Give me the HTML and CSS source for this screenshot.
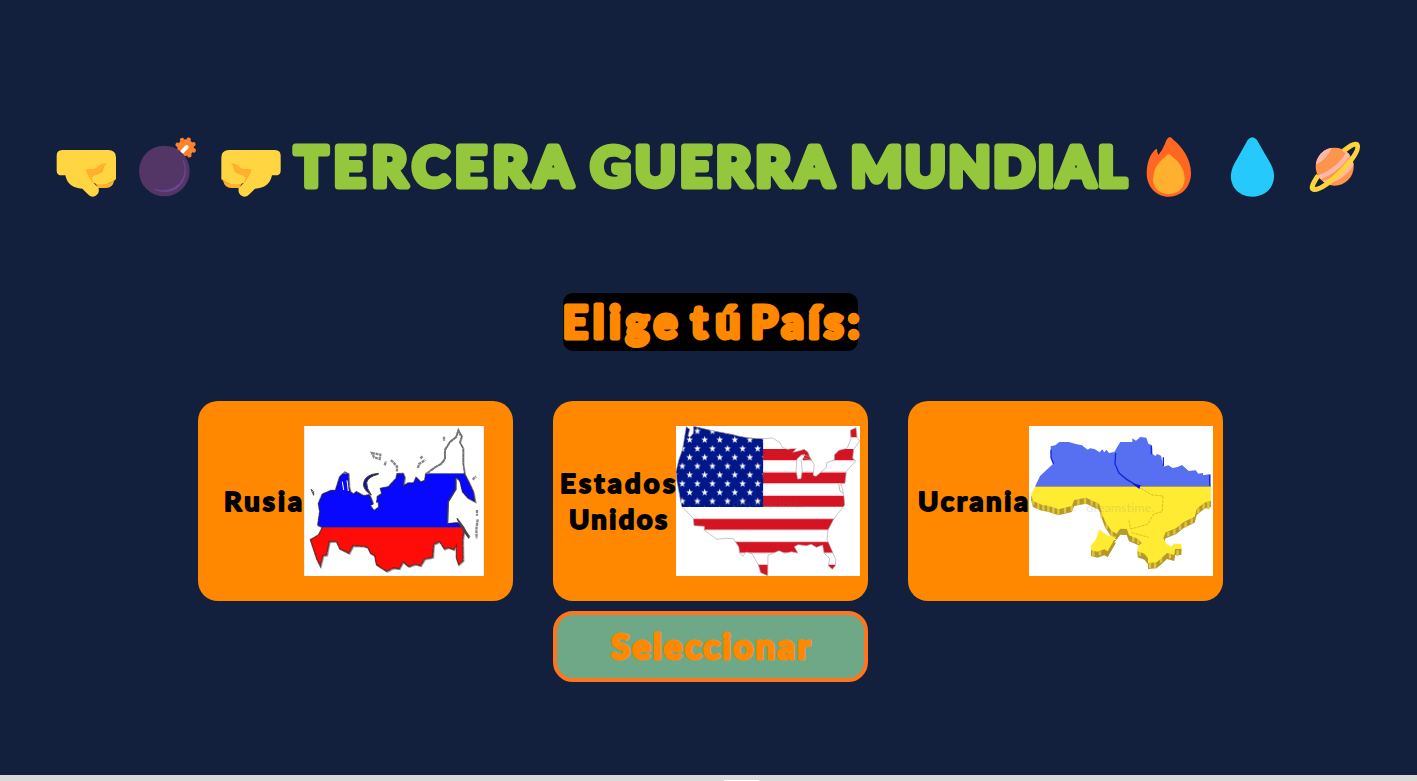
FILE: index.html
```html
<!DOCTYPE html>
<html lang="es">
<head>
<meta charset="utf-8">
<title>Tercera Guerra Mundial</title>
<link rel="stylesheet" href="styles.css">
</head>
<body>
<main class="page">
  <header class="hero">
    <div class="emojis emojis-left">
      <svg class="emoji" viewBox="45 45 192 192">
        <g id="fist">
          <path fill="#ffb02e" d="M150 160H222V184Q218 204 198 204H174Z"/>
          <path fill="#ffd642" d="M67 90H207Q228 92 228 112V177Q213 193 189 193Q170 193 160 188L176 204Q179 221 166 228Q153 234 143 222L127 206Q84 205 76 166H66Q50 166 50 152V107Q50 91 67 90Z"/>
          <path fill="#ffb02e" d="M141 147H161Q170 147 175 139Q183 130 200 130Q190 139 190 150Q188 160 177 161Q162 165 155 173L163 190Q149 181 138 152Q138 148 141 147Z"/>
          <path d="M202 191Q216 188 228 177" fill="none" stroke="#ce8623" stroke-width="2"/>
        </g>
      </svg>
      <svg class="emoji" viewBox="291 45 192 192">
        <circle cx="437" cy="83" r="25" fill="#ff822d"/>
        <circle cx="437" cy="83" r="26" fill="none" stroke="#ff822d" stroke-width="12" stroke-linecap="round" stroke-dasharray="1 19.42" stroke-dashoffset="-8"/>
        <circle cx="373" cy="153" r="76" fill="#533566"/>
        <path d="M427 95L440 81" stroke="#fff" stroke-width="12" stroke-linecap="round"/><path d="M417 91L430 103L425 108L411 97Z" fill="#533566"/>
        <path d="M430 120Q445 161 418 191Q388 220 343 208Q382 224 412 204Q449 173 430 120Z" fill="#6d4590" stroke="#6d4590" stroke-width="2"/>
      </svg>
      <svg class="emoji" viewBox="537 45 192 192"><use href="#fist" transform="translate(772 0) scale(-1 1)"/></svg>
    </div>
    <h1 class="title">
      <svg class="lettering title-text" width="854" height="64">
        <text x="12" y="50.5" textLength="277">TERCERA</text>
        <text x="308" y="50.5" textLength="242">GUERRA</text>
        <text x="568" y="50.5" textLength="275">MUNDIAL</text>
      </svg>
    </h1>
    <div class="emojis emojis-right">
      <svg class="emoji" viewBox="51 45 192 192">
        <path fill="#ff6723" d="M148 51Q154 51 161 60C186 80 213 117 213 160C213 200 186 230 147 230C108 230 80 200 80 158C81 127 90 102 107 88L111 87Q111 98 115 105Q127 91 135 71Q140 55 148 51Z"/>
        <path fill="#ffb02e" d="M139 107Q147 99 154 107Q194 137 194 175C194 206 173 222 147 222C119 222 99 206 99 176Q99 137 139 107Z"/>
      </svg>
      <svg class="emoji" viewBox="303 45 192 192">
        <path fill="#26c9fc" d="M383 60Q397 43 411 60Q423 82 452 131C479 181 449 230 397 230C345 230 316 181 343 131Q371 82 383 60Z"/>
      </svg>
      <svg class="emoji" viewBox="555 45 192 192">
        <clipPath id="planet"><circle cx="644" cy="140" r="57"/></clipPath>
        <g clip-path="url(#planet)">
          <path fill="#ff944d" d="M580 80H710V200H580Z"/>
          <path d="M575 137Q623 126 641 69L587 70ZM665 91Q681 81 705 98L690 106Q677 103 665 91Z" fill="#ffb8aa"/>
          <path d="M594 174Q656 151 690 94M610 189Q678 174 706 112" fill="none" stroke="#ffb8aa" stroke-width="14"/>
        </g>
        <path d="M671 93Q702 66 711 74Q722 90 674 143Q608 212 580 208Q569 203 595 166" fill="none" stroke="#ffd43b" stroke-width="15"/>
      </svg>
    </div>
  </header>

  <h2 class="prompt">
    <svg class="lettering prompt-text" width="295" height="58">
      <text x="0" y="45" textLength="114">Elige</text>
      <text x="128" y="45" textLength="49">tú</text>
      <text x="188" y="45" textLength="108">País:</text>
    </svg>
  </h2>

  <section class="countries">
    <article class="card">
      <svg class="lettering name" width="77" height="72"><text x="-3" y="46" textLength="78">Rusia</text></svg>
      <svg class="map" width="180" height="150" viewBox="327 93 540 450">
        <defs>
          <path id="russia-land" d="M346 434L370 420L382 397L368 390L374 350L370 325L382 297L408 286L421 286L434 245L449 231L460 236L462 275L466 290L475 297L484 290L505 302L523 299L530 315L535 331L544 329L547 304L560 296L556 280L580 275L603 250L606 236L624 235L629 247L625 272L639 264L656 263L663 247L677 261L689 256L692 237L716 220L736 208L748 194L751 165L765 140L783 125L790 107L800 123L794 142L804 160L804 205L809 238L821 261L835 291L840 320L819 309L802 290L793 256L785 248L783 283L760 321L758 385L788 383L803 397L823 425L807 407L803 435L804 497L791 509L784 489L784 452L776 464L760 458L748 462L734 440L716 448L713 487L689 492L677 512L660 508L641 515L624 501L613 521L595 519L575 529L544 509L539 482L526 474L519 458L507 454L474 452L462 475L434 461L424 439L403 440L395 480L384 482L376 514L365 491Z"/>
          <clipPath id="russia"><use href="#russia-land"/></clipPath>
        </defs>
        <path fill="#fff" d="M327 93H867V543H327Z"/>
        <use href="#russia-land" x="2" y="2" fill="#fff" stroke="#aaa" stroke-width="5"/>
        <g clip-path="url(#russia)"><path d="M327 93H867V236H327Z" fill="#fff"/><path d="M327 236H867V398H327Z" fill="#0808ff"/><path d="M327 396H867V543H327Z" fill="#ff0b08"/><path d="M327 236H867M327 397H867" stroke="#303080" stroke-width="2"/></g>
        <use href="#russia-land" fill="none" stroke="#222" stroke-opacity=".65" stroke-width="4" stroke-dasharray="13 1"/>
        <path d="M750 193V164L765 141L784 126L790 106L797 122M695 236L717 219L738 207L750 193" fill="none" stroke="#777" stroke-width="6" stroke-dasharray="12 2"/>
        <path d="M550 235Q508 238 505 268Q507 287 529 300Q515 281 515 263Q519 245 550 238Z" fill="#101098" stroke="#444" stroke-width="3"/>
        <path d="M442 260L446 285M456 256L460 288" stroke="#fff" stroke-width="3"/>
        <path d="M348 283L356 290V301ZM527 332L537 346L551 336L549 321" fill="#fff" stroke="#445" stroke-width="3"/>
        <path d="M783 250L794 262L800 291L819 318L838 325L835 345L800 360L803 390L790 378L758 385L760 321L783 283Z" fill="#fff"/>
        <path d="M783 250L783 283L760 321L758 385M786 370L806 397L822 430L806 408Z" fill="none" stroke="#444" stroke-width="4"/>
        <path d="M531 174L556 179L554 192L537 187ZM569 211L573 199M588 195L606 214V230M669 219L672 207L691 195M676 190L684 183M747 125V138M833 254L843 244M846 345V362M848 373L844 404L845 430" fill="none" stroke="#888" stroke-width="7" stroke-dasharray="9 2"/>
        <path d="M327 93V543M867 93V543" stroke="#ddd" stroke-width="3"/>
      </svg>
    </article>
    <article class="card">
      <svg class="lettering name" width="115" height="72"><text x="-1" y="28" textLength="115">Estados</text><text x="8" y="64" textLength="98">Unidos</text></svg>
      <svg class="map" width="184" height="150" viewBox="378 93 552 450">
        <defs>
          <clipPath id="usa"><path id="usa-outline" d="M409 95L419 103L414 123L420 127L430 115L431 94Q490 109 545 118Q588 131 640 131L668 129L690 143L697 157L712 163L724 161L739 160L729 172L746 168L763 163L774 172L783 195L760 188L753 197L757 224L753 251L743 252L738 225L741 192L754 180L778 184L792 208L790 241L798 244L829 217L830 203L853 195V180L867 166L891 160L903 132L901 106L918 98L921 127L929 138L911 163L908 190L917 198L889 229L885 265L872 266L877 280L882 305L884 330L851 373L834 405L831 433L848 472L857 493L856 512L847 523L835 512L839 491L822 474L818 450L799 457L784 448L769 452L744 449L733 455L744 475L725 470L705 475L687 467L654 481L653 542L632 533L625 509L606 476L588 471L578 484L569 474L566 455L550 431L525 430L501 433L463 406L463 394L432 392L430 370L395 334L381 260L378 230L386 196L397 165Z"/></clipPath>
          <clipPath id="canton"><path d="M378 93H640V336H378Z"/></clipPath>
          <pattern id="stars" x="386" y="121" width="45.2" height="52.6" patternUnits="userSpaceOnUse"><path id="star" fill="#fff" d="M33 2L35.6 10L43 10L37 15L39.3 23L33 18.3L26.7 23L29 15L23 10L30.4 10Z"/><use href="#star" x="-22" y="26.4"/></pattern>
        </defs>
        <path fill="#fff" d="M378 93H930V543H378Z"/>
        <g clip-path="url(#usa)">
          <path fill="#d41323" d="M378 93H930V127H378ZM378 162H930V196H378ZM378 232H930V266H378ZM378 302H930V335H378ZM378 371H930V405H378ZM378 440H930V474H378ZM378 509H930V543H378Z"/>
          <path fill="none" stroke="#f8cbd0" stroke-width="3" d="M640 197H930M640 231H930M640 266H930M640 301H930M378 371H930M378 405H930M378 440H930M378 474H930"/>
          <g clip-path="url(#canton)"><path fill="#001789" d="M378 93H640V336H378Z"/><path fill="url(#stars)" d="M378 93H640V336H378Z"/></g>
        </g>
        <path d="M741 192L754 180L765 178L758 194L757 224L753 251L743 252L738 225ZM792 208L790 241L798 244L829 217V205Z" fill="#fff"/>
        <use href="#usa-outline" fill="none" stroke="#aaa" stroke-width="2"/>
        <path d="M866 267L870 288L879 294" fill="none" stroke="#999" stroke-width="2"/>
        <text class="watermark" x="546" y="339" textLength="214" lengthAdjust="spacingAndGlyphs">dreamstime.</text>
      </svg>
    </article>
    <article class="card">
      <svg class="lettering name" width="111" height="72"><text x="0" y="46" textLength="110">Ucrania</text></svg>
      <svg class="map" width="184" height="150" viewBox="372 93 552 450">
        <defs>
          <path id="ukraine-land" d="M393 272L378 296L384 318L410 329L429 332L461 343L500 333L508 315L543 308L582 326L591 355L600 379L619 407L635 416L646 401L665 402L672 421L701 433L710 445L698 453V469L718 476L729 490V504L755 502L771 488L786 474L808 480L810 462H829V446H806L799 455L784 446L775 429L782 412L813 400L836 381L869 365L875 342L898 323L918 318V268ZM583 403L572 434L558 451V465L577 470L598 463L608 469L633 425L608 422Z"/>
          <clipPath id="ukraine-blue"><path d="M437 154L451 151L463 141H492L512 147L531 151L541 159L548 164L555 160L568 162L584 172L592 163L598 172L604 164L612 174L628 171L638 154L646 141H666L682 141V130L693 137L706 126L724 128L730 146L741 151L743 177L751 183L757 177L768 182L775 215L790 211L803 219L818 216L831 210L851 228L872 226L880 236L894 234V241L917 237V275H390L405 243L444 207L438 190Z"/></clipPath>
        </defs>
        <path fill="#fff" d="M372 93H924V543H372Z"/>
        <g fill="#b59a2b"><use href="#ukraine-land" y="18"/><use href="#ukraine-land" y="10"/></g>
        <path d="M385 316V331M400 324V342M415 328V347M430 330V350M445 336V355M460 342V360M480 337V355M500 331V348M520 313V330M540 309V327M560 315V332M575 323V342M590 350V369M605 383V401M620 407V423M685 424V440M700 432V447M790 410V424M808 403V419M825 390V405M842 380V397M860 370V386M880 340V354M896 325V343M910 321V343M565 465V484M585 469V481M704 470V483M735 504V520M750 502V519M768 489V503M795 476V490M818 466V482" stroke="#dfc738" stroke-width="7"/>
        <use href="#ukraine-land" fill="#ffeb32"/>
        <g clip-path="url(#ukraine-blue)"><path d="M372 93H924V275H372Z" fill="#576ff1"/></g>
        <path d="M390 274H918" stroke="#8a8667" stroke-width="2"/>
        <path d="M438 164V188L446 207M632 174L630 207L642 234L665 253L701 275M739 153V178M914 240V273M775 187V214" fill="none" stroke="#1427d8" stroke-width="4"/>
        <path d="M682 266L707 270L703 282Z" fill="#0c17d4"/>
        <path d="M708 280L741 300L774 303L772 350L746 357L728 388L677 402L671 372M680 413L731 427" fill="none" stroke="#c4aa25" stroke-width="2" stroke-dasharray="9 3"/>
        <path d="M639 410L648 403L666 404L671 420L653 418Z" fill="#b79c29"/>
        <text class="watermark" x="544" y="351" textLength="204" lengthAdjust="spacingAndGlyphs">dreamstime.</text>
      </svg>
    </article>
  </section>

  <button class="select">
    <svg class="lettering select-text" width="202" height="60"><text x="1" y="42" textLength="199">Seleccionar</text></svg>
  </button>
  <footer class="footer"><span class="tab"></span></footer>
</main>
</body>
</html>
```

FILE: styles.css
```css
* { box-sizing: border-box; }
body { margin: 0; background: #13203d; overflow: hidden; }
.page { height: 781px; display: flex; flex-direction: column; padding-top: 135px; }
svg { display: block; flex: none; }
.hero { display: flex; height: 64px; padding-left: 55px; }
.emojis { display: flex; }
.emojis-left { gap: 18px; }
.emojis-right { gap: 20px; }
.emoji { width: 64px; height: 64px; }
.title, .prompt { margin: 0; }
.lettering { overflow: visible; font-family: Lato, sans-serif; font-weight: 700; stroke-linejoin: round; stroke-linecap: round; }
.title-text { font-size: 54px; fill: #95c73d; stroke: #95c73d; stroke-width: 7px; }
.prompt { width: 295px; height: 58px; margin: 94px 0 0 563px; background: #000; border-radius: 10px; }
.prompt-text { font-size: 43px; fill: #ff8800; stroke: #ff8800; stroke-width: 5px; }
.countries { display: grid; grid-template-columns: repeat(3, 315px); gap: 40px; margin: 50px 0 0 198px; }
.card { height: 200px; display: flex; align-items: center; justify-content: center; border-radius: 20px; background: #ff8800; }
.name { font-size: 27.5px; fill: #000; stroke: #000; stroke-width: 2px; }
.select { width: 315px; height: 71px; margin: 10px 0 0 553px; padding: 0; display: flex; align-items: center; justify-content: center; border: 4px solid #ff741d; border-radius: 20px; background: #6ea887; }
.select-text { font-size: 34.5px; fill: #ff8800; stroke: #ff8800; stroke-width: 3px; }
.watermark { font: 36px Lato, sans-serif; fill: #777; stroke: none; opacity: .16; }
.footer { height: 6px; margin-top: auto; display: flex; align-items: flex-end; background: #dadada; }
.tab { width: 35px; height: 1px; margin-left: 724px; background: #fff; }
```
